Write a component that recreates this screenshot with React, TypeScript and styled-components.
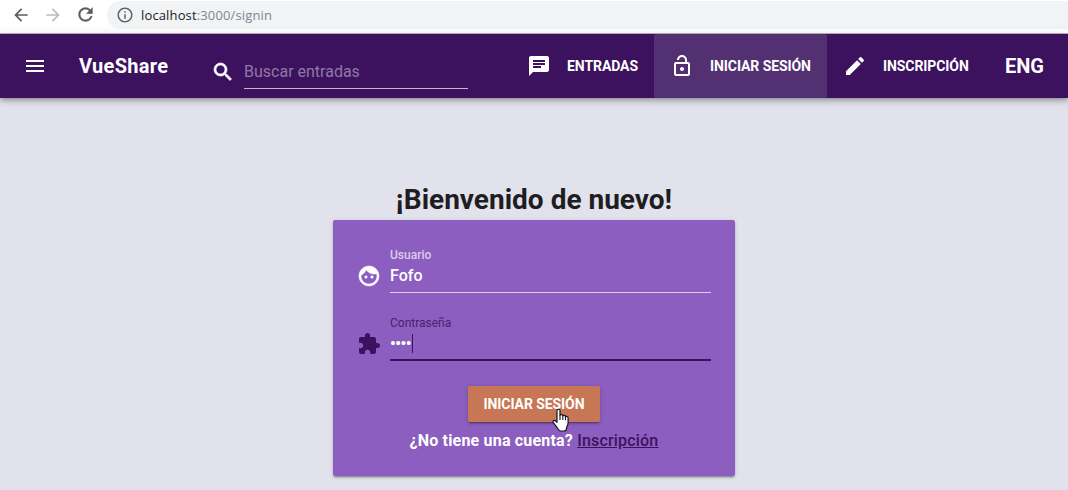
import React from "react";
import styled, { createGlobalStyle } from "styled-components";
import {
  MdArrowBack, MdArrowForward, MdRefresh, MdInfoOutline, MdMenu, MdSearch,
  MdChat, MdLockOpen, MdEdit, MdFace, MdExtension,
} from "react-icons/md";

const GlobalStyle = createGlobalStyle`
  *, *::before, *::after { box-sizing: border-box; }
  body { margin: 0; background: #e2e2ec; font-family: Roboto, "Liberation Sans", sans-serif; overflow: hidden; }
  svg { display: block; flex: none; }
  svg path[fill="none"]:first-child { stroke: none; }
`;

const Page = styled.div`
  height: 490px;
  display: flex;
  flex-direction: column;
  overflow: hidden;
`;

const BrowserBar = styled.div`
  height: 34px;
  flex: none;
  display: flex;
  align-items: flex-start;
  padding: 1px 0 0 11px;
  background: #fff;
  border-bottom: 1px solid #b7b5b9;
`;

const BrowserButton = styled.span<{ $dim?: boolean }>`
  width: 32px;
  padding: 4px 0 0 0;
  color: ${(p) => (p.$dim ? "#babcbe" : "#5a5d61")};
`;

const ReloadIcon = styled(MdRefresh)`
  margin-top: -1px;
  stroke: currentColor;
  stroke-width: 0.4px;
`;

const AddressField = styled.div`
  flex: 1;
  height: 28px;
  display: flex;
  align-items: center;
  padding-left: 9px;
  border-radius: 14px 0 0 14px;
  background: #f1f3f4;
  color: #5f6368;
`;

const Address = styled.span`
  margin-left: 7px;
  font: 13px/18px "Open Sans", "Noto Sans", sans-serif;
  letter-spacing: 0.14px;
  color: #80868b;
  white-space: nowrap;
`;

const Host = styled.span`
  color: #202124;
`;

const Toolbar = styled.header`
  height: 64px;
  flex: none;
  display: flex;
  align-items: center;
  padding-left: 23px;
  background: #3c125f;
  color: #fff;
  position: relative;
  box-shadow: 0 2px 4px -1px rgba(0, 0, 0, 0.2), 0 4px 5px 0 rgba(0, 0, 0, 0.14), 0 1px 10px 0 rgba(0, 0, 0, 0.12);
`;

const Brand = styled.div`
  width: 132px;
  margin-left: 32px;
  font-size: 20px;
  font-weight: 700;
  letter-spacing: 0.3px;
`;

const SearchBox = styled.div`
  display: flex;
  align-items: flex-start;
  padding-top: 17px;
`;

const SearchIcon = styled(MdSearch)`
  stroke: currentColor;
  stroke-width: 0.7px;
`;

const SearchInput = styled.div`
  width: 224px;
  height: 29px;
  margin-left: 9px;
  border-bottom: 1px solid #c4b8cf;
  font-size: 16px;
  line-height: 24px;
  color: #9278a5;
`;

const Nav = styled.nav`
  display: flex;
  height: 100%;
  margin-left: 43px;
`;

const NavItem = styled.a<{ $width: number; $active?: boolean }>`
  width: ${(p) => p.$width}px;
  display: flex;
  align-items: center;
  gap: 16px;
  padding-left: 16px;
  border-radius: 2px;
  background: ${(p) => (p.$active ? "#533071" : "transparent")};
  font-size: 14px;
  font-weight: 700;
  letter-spacing: -0.08px;
  white-space: nowrap;
`;

const Language = styled.span`
  margin-left: 20px;
  font-size: 20px;
  font-weight: 700;
`;

const Main = styled.main`
  flex: 1;
  display: flex;
  flex-direction: column;
  align-items: center;
  padding-top: 82px;
`;

const Heading = styled.h1`
  margin: 0;
  height: 40px;
  font-size: 28px;
  font-weight: 700;
  line-height: 40px;
  color: #1e1d22;
`;

const Card = styled.div`
  width: 402px;
  height: 256px;
  padding: 26px 24px 0;
  display: flex;
  flex-direction: column;
  align-items: center;
  border-radius: 2px;
  background: #8c5ebf;
  color: #fff;
  box-shadow: 0 3px 1px -2px rgba(0, 0, 0, 0.2), 0 2px 2px 0 rgba(0, 0, 0, 0.14), 0 1px 5px 0 rgba(0, 0, 0, 0.12);
`;

const Field = styled.div<{ $focused?: boolean }>`
  width: 100%;
  height: 68px;
  display: flex;
  gap: 9px;
  color: ${(p) => (p.$focused ? "#3c125f" : "#fff")};
`;

const FieldIcon = styled.span`
  padding-top: 18px;
`;

const FaceIcon = styled(MdFace)`
  stroke: currentColor;
  stroke-width: 0.5px;
`;

const FieldBody = styled.div`
  flex: 1;
`;

const Label = styled.div<{ $focused?: boolean }>`
  height: 18px;
  font-size: 12px;
  line-height: 18px;
  font-weight: ${(p) => (p.$focused ? 400 : 500)};
  color: ${(p) => (p.$focused ? "#4a1e70" : "#dccdea")};
`;

const Value = styled.div<{ $focused?: boolean }>`
  height: 29px;
  display: flex;
  border-bottom: ${(p) => (p.$focused ? "2px solid #3c125f" : "1px solid #dccdea")};
  font-size: 16px;
  line-height: 24px;
  font-weight: 500;
  color: #fff;
`;

const Dots = styled.span`
  width: 22px;
  font-weight: 700;
  letter-spacing: -0.5px;
`;

const Caret = styled.span`
  width: 1px;
  height: 19px;
  margin-top: 2px;
  background: #3c125f;
`;

const Submit = styled.button`
  width: 132px;
  height: 36px;
  flex: none;
  margin-top: 4px;
  padding: 0;
  position: relative;
  border: 0;
  border-radius: 2px;
  background: #c77755;
  color: #fff;
  font: 700 14px Roboto, sans-serif;
  letter-spacing: -0.08px;
  box-shadow: 0 3px 1px -2px rgba(0, 0, 0, 0.2), 0 2px 2px 0 rgba(0, 0, 0, 0.14), 0 1px 5px 0 rgba(0, 0, 0, 0.12);
`;

const Pointer = styled.svg`
  position: absolute;
  left: 83px;
  top: 22px;
`;

const Prompt = styled.div`
  margin-top: 7px;
  font-size: 16px;
  line-height: 24px;
  font-weight: 700;
  letter-spacing: 0.19px;
  white-space: nowrap;
`;

const SignUpLink = styled.a`
  color: #3c125f;
  font-weight: 500;
  text-decoration: underline;
`;

export default function App() {
  return (
    <Page>
      <GlobalStyle />
      <BrowserBar>
        <BrowserButton><MdArrowBack size={20} /></BrowserButton>
        <BrowserButton $dim><MdArrowForward size={20} /></BrowserButton>
        <BrowserButton><ReloadIcon size={21} /></BrowserButton>
        <AddressField>
          <MdInfoOutline size={18} />
          <Address><Host>localhost</Host>:3000/signin</Address>
        </AddressField>
      </BrowserBar>
      <Toolbar>
        <MdMenu size={24} />
        <Brand>VueShare</Brand>
        <SearchBox>
          <SearchIcon size={24} />
          <SearchInput>Buscar entradas</SearchInput>
        </SearchBox>
        <Nav>
          <NavItem $width={143}><MdChat size={24} />ENTRADAS</NavItem>
          <NavItem $width={173} $active><MdLockOpen size={24} />INICIAR SESIÓN</NavItem>
          <NavItem $width={158}><MdEdit size={24} />INSCRIPCIÓN</NavItem>
        </Nav>
        <Language>ENG</Language>
      </Toolbar>
      <Main>
        <Heading>¡Bienvenido de nuevo!</Heading>
        <Card>
          <Field>
            <FieldIcon><FaceIcon size={24} /></FieldIcon>
            <FieldBody>
              <Label>Usuario</Label>
              <Value>Fofo</Value>
            </FieldBody>
          </Field>
          <Field $focused>
            <FieldIcon><MdExtension size={24} /></FieldIcon>
            <FieldBody>
              <Label $focused>Contraseña</Label>
              <Value $focused><Dots>••••</Dots><Caret /></Value>
            </FieldBody>
          </Field>
          <Submit>
            INICIAR SESIÓN
            <Pointer width="20" height="24" viewBox="0 0 20 24">
              <path
                d="M6 2.5C6 .8 9 .8 9 2.5V7c.7-.7 2.5-.5 2.8.7.8-.7 2.4-.4 2.7.8 1-.5 2.6 0 2.6 1.5v5c0 2-1.6 3.8-1.6 5.2 0 1.8-.8 2.8-2.5 2.8H9.5c-1.6 0-2-1-2.6-2.2-1-2-3.4-4.4-4.7-6.4-1-1.8 1.2-2.6 2.4-1.4L6 14.3z"
                fill="#fff" stroke="#171421" strokeWidth="1.2" strokeLinejoin="round"
              />
              <path d="M9 7v4.5M11.8 8v3.5M14.5 8.7v3" fill="none" stroke="#171421" strokeWidth="1.1" strokeLinecap="round" />
            </Pointer>
          </Submit>
          <Prompt>¿No tiene una cuenta? <SignUpLink>Inscripción</SignUpLink></Prompt>
        </Card>
      </Main>
    </Page>
  );
}
